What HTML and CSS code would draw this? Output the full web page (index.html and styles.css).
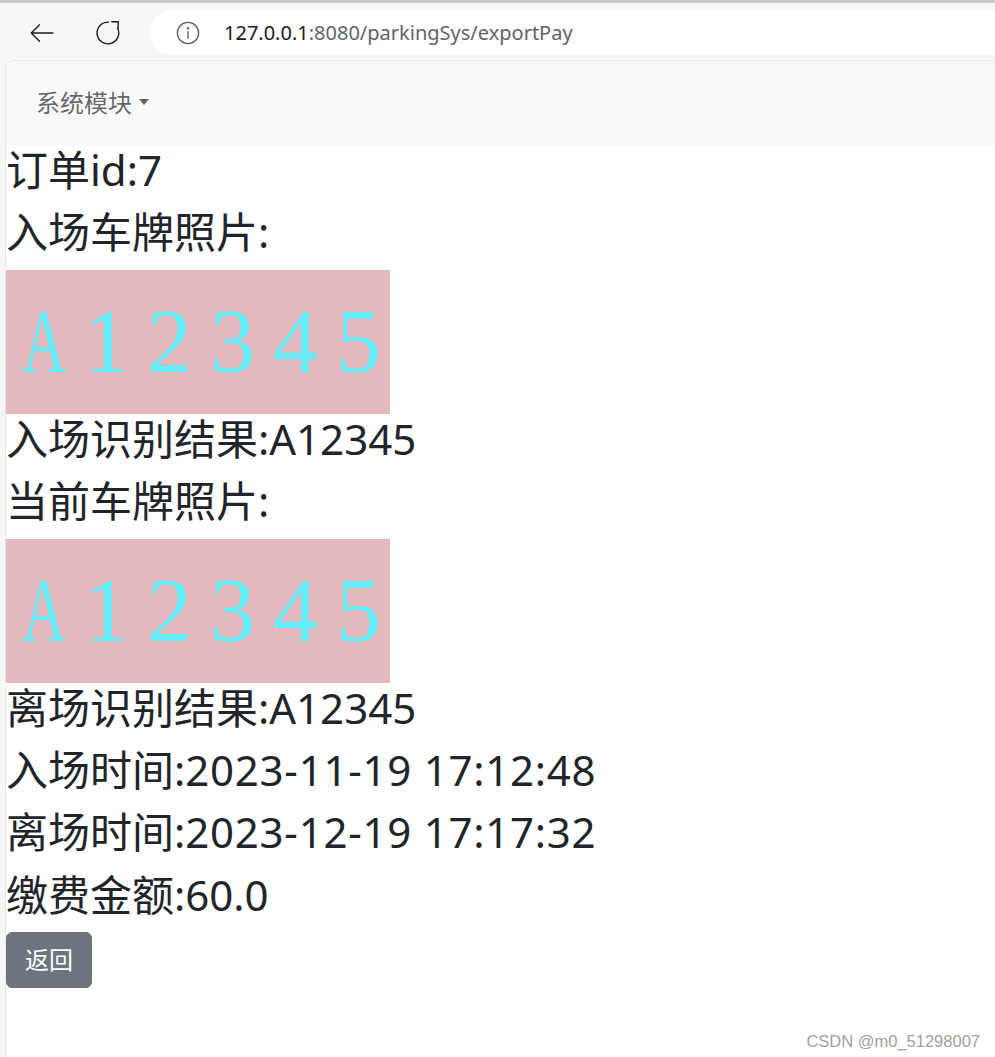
FILE: index.html
```html
<!DOCTYPE html>
<html lang="zh-CN">
<head>
    <meta charset="UTF-8">
    <meta name="viewport" content="width=device-width, initial-scale=1.0">
    <title>缴费详情</title>
    <link rel="stylesheet" href="styles.css">
</head>
<body>
    <!-- barra do navegador -->
    <div class="chrome-top"></div>
    <div class="toolbar">
        <div class="tool-btn">
            <svg width="24" height="24" viewBox="0 0 24 24" fill="none" stroke="#1f1f1f" stroke-width="1.4" stroke-linecap="round" stroke-linejoin="round">
                <path d="M23 12H1.5M9.5 3.8L1.3 12l8.2 8.2"/>
            </svg>
        </div>
        <div class="tool-btn">
            <svg width="26" height="26" viewBox="0 0 24 24" fill="none" stroke="#1f1f1f" stroke-width="1.3" stroke-linecap="round" stroke-linejoin="round">
                <path d="M12.5 2A10 10 0 1 0 20.9 7.6"/>
                <path d="M15.5 1.6H21.4V7.5"/>
            </svg>
        </div>
        <div class="urlbar">
            <svg class="url-info" width="24" height="24" viewBox="0 0 24 24" fill="none" stroke="#5f6368" stroke-width="1.4" stroke-linecap="round">
                <circle cx="12" cy="12" r="10.6"/>
                <line x1="12" y1="10.6" x2="12" y2="17.2"/>
                <circle cx="12" cy="7.3" r="0.6" fill="#5f6368"/>
            </svg>
            <span class="url-text"><span class="url-host">127.0.0.1</span>:8080/parkingSys/exportPay</span>
        </div>
    </div>

    <div class="page">
        <nav class="navbar">
            <span class="nav-link dropdown-toggle">系统模块</span>
        </nav>

        <!-- detalhes do pagamento -->
        <main class="detalhe">
            <h3>订单id:7</h3>
            <h3>入场车牌照片:</h3>
            <div class="placa">
                <span class="estreito">A</span><span>1</span><span>2</span><span>3</span><span>4</span><span>5</span>
            </div>
            <h3>入场识别结果:A12345</h3>
            <h3>当前车牌照片:</h3>
            <div class="placa">
                <span class="estreito">A</span><span>1</span><span>2</span><span>3</span><span>4</span><span>5</span>
            </div>
            <h3>离场识别结果:A12345</h3>
            <h3>入场时间:<span class="hora">2023-11-19 17:12:48</span></h3>
            <h3>离场时间:<span class="hora">2023-12-19 17:17:32</span></h3>
            <h3>缴费金额:60.0</h3>
            <button class="btn-voltar">返回</button>
        </main>

        <div class="marca">CSDN @m0_51298007</div>
    </div>
</body>
</html>
```

FILE: styles.css
```css
* {
    box-sizing: border-box;
}

body {
    margin: 0;
    padding: 0;
    background-color: #f7f7f7;
    font-family: "Noto Sans", "Noto Sans CJK SC", sans-serif;
    overflow: hidden;
}

.chrome-top {
    height: 3px;
    background-color: #c9c9c9;
}

.toolbar {
    display: flex;
    align-items: center;
    height: 58px;
    padding: 7px 0 6px 24px;
}

.tool-btn {
    width: 36px;
    height: 36px;
    display: flex;
    align-items: center;
    justify-content: center;
}

.tool-btn + .tool-btn {
    margin-left: 30px;
}

.urlbar {
    flex: 1;
    height: 45px;
    margin-left: 24px;
    padding-left: 26px;
    background-color: #fff;
    border-radius: 23px 0 0 23px;
    display: flex;
    align-items: center;
}

.url-info {
    margin-right: 24px;
}

.url-text {
    font-size: 20px;
    color: #5f6368;
    white-space: nowrap;
}

.url-host {
    color: #1b1b1b;
}

.page {
    position: relative;
    margin-left: 6px;
    height: calc(100vh - 61px);
    background-color: #fff;
    border-top-left-radius: 8px;
    box-shadow: 0 0 0 1px #e8e8e8;
    overflow: hidden;
}

.navbar {
    height: 84px;
    padding: 12px 24px;
    background-color: #f8f9fa;
}

.nav-link {
    display: inline-block;
    padding: 12px 6px;
    font-size: 24px;
    line-height: 36px;
    color: rgba(0, 0, 0, 0.6);
}

.dropdown-toggle::after {
    content: "";
    display: inline-block;
    margin-left: 7px;
    vertical-align: 7px;
    border-top: 6px solid;
    border-left: 5px solid transparent;
    border-right: 5px solid transparent;
}

.detalhe h3 {
    margin: 0 0 12px;
    font-size: 42px;
    line-height: 50.4px;
    font-weight: 400;
    color: #212529;
}

.detalhe .hora {
    letter-spacing: 0.75px;
}

.placa {
    width: 384px;
    height: 144px;
    padding-left: 6px;
    background-color: #e4babf;
    display: flex;
    align-items: center;
}

.placa span {
    width: 63px;
    text-align: center;
    font-family: "Liberation Serif", serif;
    font-size: 90px;
    line-height: 90px;
    color: #62eefa;
}

.placa .estreito {
    transform: scaleX(0.68);
}

.btn-voltar {
    display: inline-block;
    padding: 9px 18px;
    font-family: inherit;
    font-size: 24px;
    line-height: 36px;
    color: #fff;
    background-color: #6c757d;
    border: 1px solid #6c757d;
    border-radius: 6px;
    cursor: pointer;
}

.marca {
    position: absolute;
    right: 15px;
    bottom: 6px;
    font-family: "Liberation Sans", Arial, sans-serif;
    font-size: 16.5px;
    color: #a0a0a0;
}
```
